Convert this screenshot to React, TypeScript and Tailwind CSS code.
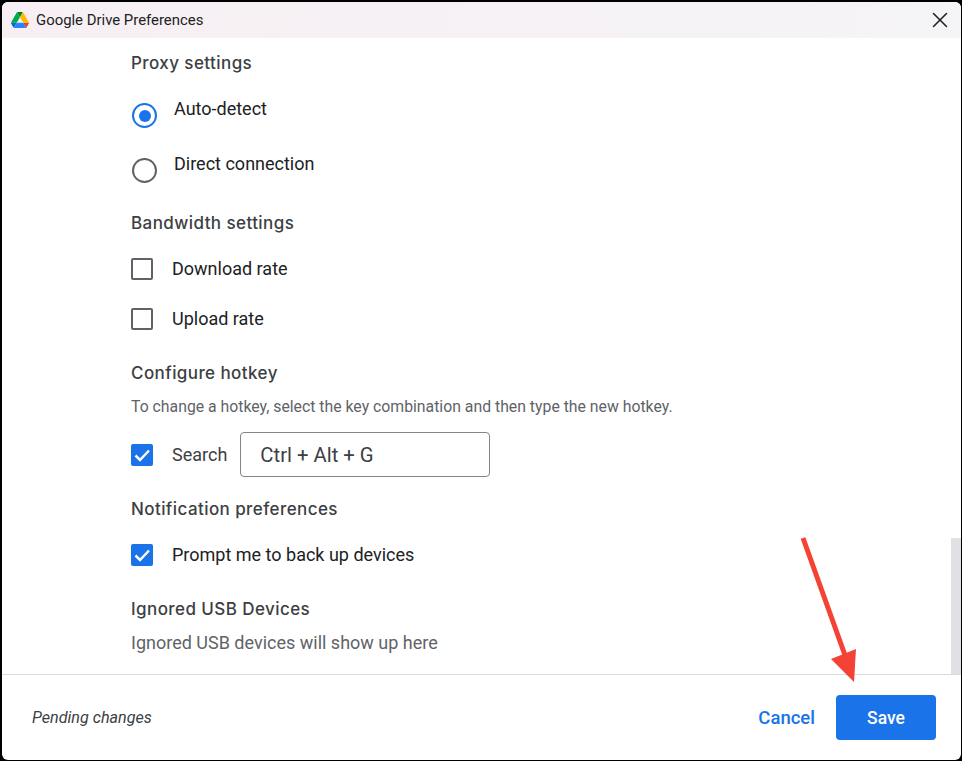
import React from 'react';
import { X } from 'lucide-react';

const DriveLogo = () => <svg width="18" height="16" viewBox="0 0 87.3 78" className="shrink-0">
    <path d="M6.6 66.85l3.85 6.65c.8 1.4 1.95 2.5 3.3 3.3L27.5 53H0c0 1.55.4 3.1 1.2 4.5z" fill="#0066da" />
    <path d="M43.65 25L29.9 1.2c-1.35.8-2.5 1.9-3.3 3.3L1.2 48.5A9 9 0 0 0 0 53h27.5z" fill="#00ac47" />
    <path d="M73.55 76.8c1.35-.8 2.5-1.9 3.3-3.3l1.6-2.75L86.1 57.5c.8-1.4 1.2-2.95 1.2-4.5H59.8l5.85 11.5z" fill="#ea4335" />
    <path d="M43.65 25L57.4 1.2C56.05.4 54.5 0 52.9 0H34.4c-1.6 0-3.15.45-4.5 1.2z" fill="#00832d" />
    <path d="M59.8 53H27.5L13.75 76.8c1.35.8 2.9 1.2 4.5 1.2h50.8c1.6 0 3.15-.45 4.5-1.2z" fill="#2684fc" />
    <path d="M73.4 26.5L60.7 4.5c-.8-1.4-1.95-2.5-3.3-3.3L43.65 25 59.8 53h27.45c0-1.55-.4-3.1-1.2-4.5z" fill="#ffba00" />
  </svg>;

const Heading = ({ children, className = '' }: { children: React.ReactNode; className?: string }) => <h2 className={`font-['Inter',sans-serif] text-[17px] tracking-[0.42px] leading-5 font-medium text-[#3c4043] ${className}`}>
    {children}
  </h2>;

const Radio = ({ label, checked }: { label: string; checked?: boolean }) => <div className="flex items-start h-[25px] ml-px">
    <span className={`mt-[5px] w-[25px] h-[25px] rounded-full border-[2px] flex items-center justify-center shrink-0 ${checked ? 'border-[#1a73e8]' : 'border-[#5f6368]'}`}>
      {checked && <span className="w-[12px] h-[12px] rounded-full bg-[#1a73e8]"></span>}
    </span>
    <span className="ml-[17px] text-[18px] leading-[22px] text-[#202124]">{label}</span>
  </div>;

const Checkbox = ({ checked }: { checked?: boolean }) => checked ? <span className="w-[22px] h-[22px] rounded-[2px] bg-[#1a73e8] flex items-center justify-center shrink-0">
      <svg width="22" height="22" viewBox="0 0 22 22" fill="none"><path d="M4.5 11.5l4.5 4.5 9-9.5" stroke="#fff" strokeWidth="2.5" /></svg>
    </span> : <span className="w-[22px] h-[22px] rounded-[2px] border-[2px] border-[#5f6368] shrink-0"></span>;

const CheckRow = ({ label, checked }: { label: string; checked?: boolean }) => <div className="flex items-center h-[22px]">
    <Checkbox checked={checked} />
    <span className="ml-[19px] text-[18px] leading-[22px] text-[#202124]">{label}</span>
  </div>;

export default function App() {
  return <div className="relative w-[962px] h-[761px] bg-black pl-[2px] pt-[2px] pr-px pb-px font-['Roboto',sans-serif]">
      <div className="relative w-full h-full bg-white rounded-[6px] overflow-hidden flex flex-col">
        <header className="h-[36px] shrink-0 flex items-center pl-[9px] pr-[8px] bg-gradient-to-r from-[#f7eff3] to-[#f5f4f6]">
          <DriveLogo />
          <span className="ml-[7px] text-[14.9px] text-[#202124]">Google Drive Preferences</span>
          <X size={26} strokeWidth={1.4} className="ml-auto text-[#202124]" />
        </header>

        <div className="flex-1 flex min-h-0">
          <main className="flex-1 pl-[129px] pt-[15px]">
            <Heading>Proxy settings</Heading>
            <div className="mt-[25px] flex flex-col gap-[30px]">
              <Radio label="Auto-detect" checked />
              <Radio label="Direct connection" />
            </div>

            <Heading className="mt-[35px]">Bandwidth settings</Heading>
            <div className="mt-[25px] flex flex-col gap-[28px]">
              <CheckRow label="Download rate" />
              <CheckRow label="Upload rate" />
            </div>

            <Heading className="mt-[33px]">Configure hotkey</Heading>
            <p className="mt-[14px] text-[15.8px] leading-5 text-[#5f6368]">To change a hotkey, select the key combination and then type the new hotkey.</p>
            <div className="mt-[15px] flex items-center">
              <Checkbox checked />
              <span className="ml-[19px] text-[18px] text-[#3c4043]">Search</span>
              <div className="ml-[13px] w-[250px] h-[45px] flex items-center pl-[19px] pt-[2px] border border-[#80868b] rounded-[4px] text-[20.3px] text-[#3c4043]">Ctrl + Alt + G</div>
            </div>

            <Heading className="mt-[22px]">Notification preferences</Heading>
            <div className="mt-[25px]">
              <CheckRow label="Prompt me to back up devices" checked />
            </div>

            <Heading className="mt-[33px]">Ignored USB Devices</Heading>
            <p className="mt-[13px] text-[18px] leading-[22px] text-[#5f6368]">Ignored USB devices will show up here</p>
          </main>
          <div className="w-[10px] shrink-0 flex flex-col justify-end">
            <div className="h-[136px] bg-[#dfe1e5]"></div>
          </div>
        </div>

        <footer className="h-[86px] shrink-0 border-t border-[#dadce0] flex items-center pl-[30px] pr-[25px]">
          <span className="pt-[2px] text-[16.15px] italic text-[#3c4043]">Pending changes</span>
          <button className="ml-auto pt-[2px] text-[18.5px] font-medium text-[#1a73e8]">Cancel</button>
          <button className="ml-[21px] w-[100px] h-[45px] pt-[2px] rounded-[4px] bg-[#1a73e8] text-[17.5px] font-medium text-white">Save</button>
        </footer>
      </div>

      {/* annotation arrow */}
      <svg className="absolute left-[790px] top-[530px]" width="80" height="160" viewBox="0 0 80 160" fill="none">
        <path d="M13 8L56 128" stroke="#f44336" strokeWidth="5" />
        <path d="M41 129L66 119L64 152Z" fill="#f44336" />
      </svg>
    </div>;
}
